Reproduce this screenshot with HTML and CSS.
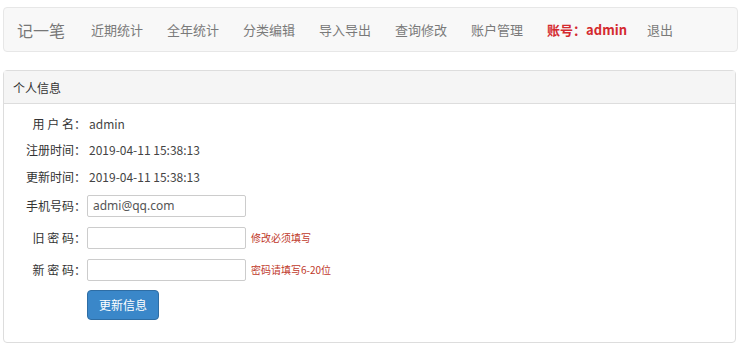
FILE: index.html
```html
<!DOCTYPE html>
<html lang="zh">
<head>
<meta charset="utf-8">
<title>记一笔</title>
<link rel="stylesheet" href="styles.css">
</head>
<body>
<div class="page">
  <nav class="navbar">
    <span class="brand">记一笔</span>
    <ul class="nav">
      <li>近期统计</li>
      <li>全年统计</li>
      <li>分类编辑</li>
      <li>导入导出</li>
      <li>查询修改</li>
      <li>账户管理</li>
      <li class="account">账号：admin</li>
      <li>退出</li>
    </ul>
  </nav>
  <section class="panel">
    <div class="panel-heading">个人信息</div>
    <div class="panel-body">
      <div class="row"><span class="label">用 户 名：</span><span class="value">admin</span></div>
      <div class="row"><span class="label">注册时间：</span><span class="value">2019-04-11 15:38:13</span></div>
      <div class="row"><span class="label">更新时间：</span><span class="value">2019-04-11 15:38:13</span></div>
      <div class="row field"><span class="label">手机号码：</span><input class="input" type="text" value="admi@qq.com"></div>
      <div class="row field"><span class="label">旧 密 码：</span><input class="input" type="password"><span class="hint">修改必须填写</span></div>
      <div class="row field"><span class="label">新 密 码：</span><input class="input" type="password"><span class="hint">密码请填写6-20位</span></div>
      <div class="row actions"><span class="label"></span><button class="btn" type="button">更新信息</button></div>
    </div>
  </section>
</div>
</body>
</html>
```
FILE: styles.css
```css
* { box-sizing: border-box; }
html, body { margin: 0; padding: 0; background: #fff; }
body {
  font-family: "Noto Sans CJK SC", "Noto Sans", sans-serif;
  color: #333;
  font-size: 12px;
}
.page { padding: 7px 4px 0 3px; }
.navbar {
  display: flex;
  align-items: center;
  height: 45px;
  background: #f8f8f8;
  border: 1px solid #e7e7e7;
  border-radius: 4px;
  padding-left: 13px;
}
.brand {
  font-size: 16px;
  color: #777;
  margin-right: 26px;
}
.nav {
  display: flex;
  list-style: none;
  margin: 0;
  padding: 0;
  gap: 24px;
}
.nav li {
  font-size: 13px;
  color: #7a7a7a;
  white-space: nowrap;
}
.nav .account {
  color: #d42a2f;
  font-weight: bold;
  margin-right: -4px;
}
.panel {
  margin-top: 18px;
  margin-right: 2px;
  border: 1px solid #ddd;
  border-radius: 4px;
  height: 273px;
}
.panel-heading {
  height: 33px;
  display: flex;
  align-items: center;
  padding-left: 9px;
  background: #f5f5f5;
  border-bottom: 1px solid #ddd;
  font-size: 12px;
  color: #333;
}
.panel-body { padding: 6px 0 0 0; }
.row {
  display: flex;
  align-items: center;
  height: 26.5px;
}
.label {
  width: 82px;
  text-align: right;
  flex-shrink: 0;
  color: #333;
}
.value { margin-left: 3px; color: #444; }
.field { height: 22px; margin-bottom: 10px; }
.row:nth-child(3) { margin-bottom: 5px; }
.input {
  margin-left: 1px;
  width: 159px;
  height: 22px;
  border: 1px solid #ccc;
  border-radius: 2px;
  font-family: "Noto Sans", sans-serif;
  font-size: 12px;
  color: #555;
  padding: 0 5px;
}
.hint {
  margin-left: 5px;
  color: #c0392b;
  font-size: 10px;
}
.actions { height: 30px; margin-top: -1px; }
.btn {
  margin-left: 1px;
  width: 72px;
  height: 30px;
  background: #3a87c9;
  border: 1px solid #2e6da4;
  border-radius: 4px;
  color: #fff;
  font-family: "Noto Sans CJK SC", sans-serif;
  font-size: 12px;
  padding: 0;
}
```
